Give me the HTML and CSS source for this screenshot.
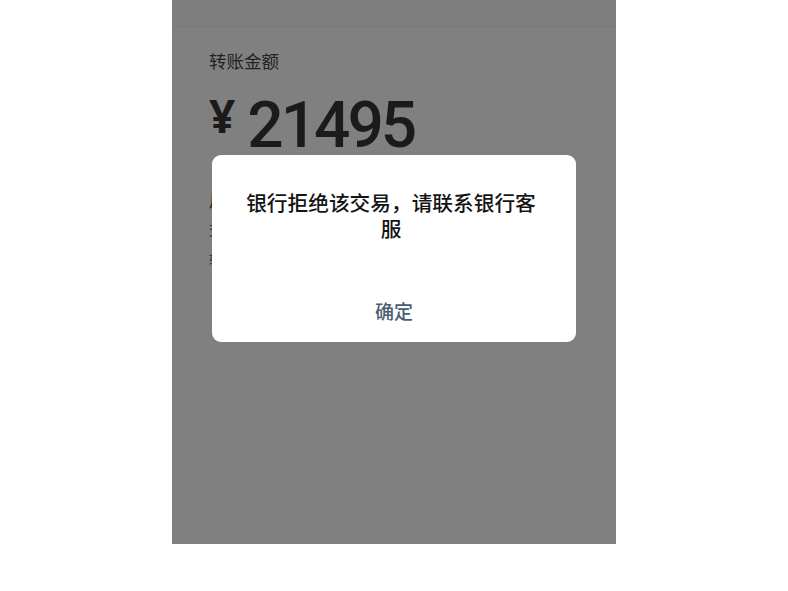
FILE: index.html
```html
<!DOCTYPE html>
<html lang="zh">
<head>
<meta charset="utf-8">
<link rel="stylesheet" href="styles.css">
</head>
<body>
<div class="phone">
  <div class="topbar"></div>
  <div class="content">
    <div class="label">转账金额</div>
    <div class="amount"><span class="yen">¥</span><span class="num">21495</span></div>
    <div class="info-title">启用</div>
    <div class="info-line">交易</div>
    <div class="info-line second">转账</div>
  </div>
  <div class="dialog">
    <div class="dialog-msg">银行拒绝该交易，请联系银行客服</div>
    <div class="dialog-btn">确定</div>
  </div>
</div>
</body>
</html>
```

FILE: styles.css
```css
html, body {
  margin: 0;
  padding: 0;
  background: #ffffff;
}
body {
  font-family: "Noto Sans CJK SC", "Noto Sans", sans-serif;
}
.phone {
  position: relative;
  margin-left: 172px;
  width: 444px;
  height: 544px;
  background: #808080;
  overflow: hidden;
}
.topbar {
  height: 26px;
  background: #7f7f7f;
  border-bottom: 1px solid #7b7b7b;
}
.content {
  padding: 22px 0 0 37px;
  color: #1b1b1b;
}
.label {
  font-size: 17.5px;
  line-height: 24px;
  color: #222;
}
.amount {
  display: flex;
  align-items: flex-start;
  margin-top: 24px;
  height: 70px;
}
.yen {
  font-family: "Noto Sans", sans-serif;
  font-weight: 700;
  font-size: 46px;
  line-height: 46px;
  margin-top: -5px;
  margin-right: 12px;
}
.num {
  font-family: "Roboto", sans-serif;
  font-weight: 500;
  font-size: 64px;
  line-height: 64px;
  letter-spacing: -3px;
  margin-top: -3px;
}
.info-title {
  margin-top: 20px;
  font-size: 18px;
  line-height: 24px;
  color: #1b1b1b;
}
.info-line {
  margin-top: 8px;
  font-size: 14px;
  line-height: 20px;
  color: #333;
}
.info-line.second {
  margin-top: 10px;
}
.dialog {
  position: absolute;
  left: 40px;
  top: 155px;
  width: 364px;
  height: 187px;
  background: #ffffff;
  border-radius: 9px;
  display: flex;
  flex-direction: column;
  align-items: center;
}
.dialog-msg {
  margin-top: 34px;
  margin-right: 6px;
  width: 294px;
  text-align: center;
  font-size: 20.7px;
  font-weight: 500;
  line-height: 26px;
  color: #151515;
}
.dialog-btn {
  margin-top: auto;
  margin-bottom: 19px;
  font-size: 19px;
  font-weight: 500;
  line-height: 24px;
  color: #4b5d73;
}
```
